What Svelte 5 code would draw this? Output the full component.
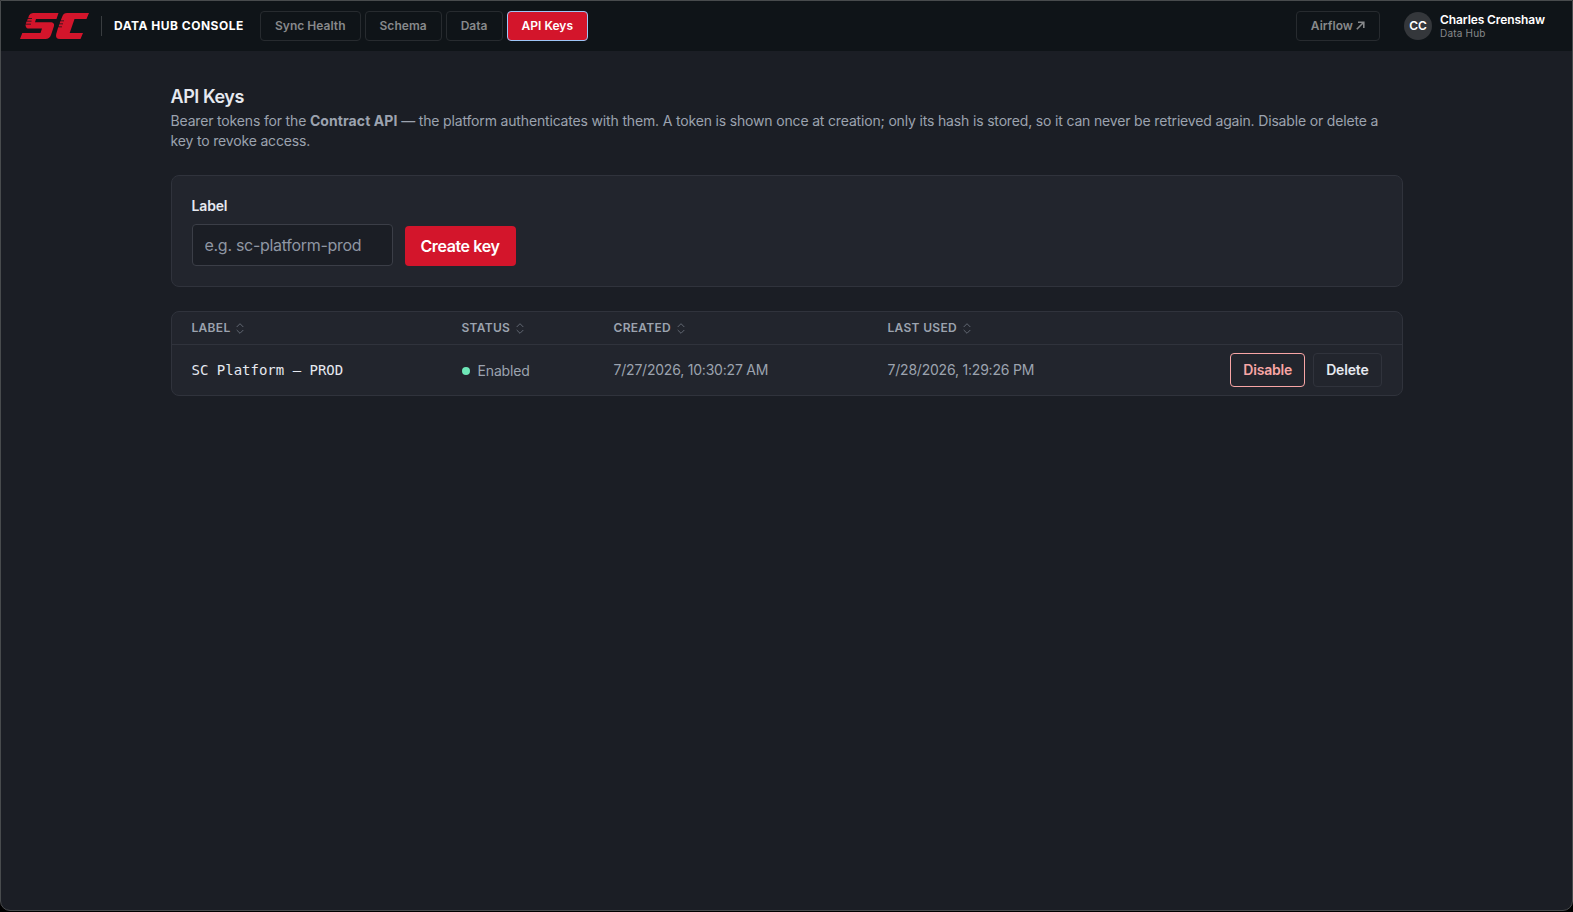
<script>
  const tabs = ['Sync Health', 'Schema', 'Data', 'API Keys'];
  const active = 'API Keys';
  const columns = ['Label', 'Status', 'Created', 'Last used'];
  const keys = [
    {
      label: 'SC Platform — PROD',
      status: 'Enabled',
      created: '7/27/2026, 10:30:27 AM',
      used: '7/28/2026, 1:29:26 PM'
    }
  ];
</script>

<div class="window">
  <header>
    <svg class="logo" width="70" height="27" viewBox="0 0 70 27" aria-label="SC">
      <g fill="#d3152b">
        <path d="M13 0H38.500L36.500 6H16L15 9.200H31.500Q34.500 9.700 34 13L31 22Q29.500 26 25.500 26H0L2.300 20H20.500L22 15.500H8Q5.500 15 5.500 11.400H11V10.700H5.800L6.500 8.500H11.500V7.800H7L7.800 5.700H12V5H8.200L9 2.500Q10 0 13 0Z" />
        <path d="M47 0H69L66.500 6H54.500L49.700 20H63L60.500 26H40Q35 26 36.200 21L38.200 14.300H42V13.600H38.600L39.300 11.300H43V10.600H39.600L40.300 8.300H44V7.600H40.700L42.500 3Q43.500 0 47 0Z" />
      </g>
    </svg>
    <span class="rule"></span>
    <strong class="product">DATA HUB CONSOLE</strong>
    <nav>
      {#each tabs as tab}
        <button class="tab" class:active={tab === active}>{tab}</button>
      {/each}
    </nav>
    <button class="tab airflow">Airflow
      <svg width="9" height="9" viewBox="0 0 9 9" fill="none" stroke="currentColor" stroke-width="1.6"><path d="M.8 8.200 7.700 1.300M2 1.200H7.800V7" /></svg>
    </button>
    <div class="avatar">CC</div>
    <div class="user">
      <span class="name">Charles Crenshaw</span>
      <span class="team">Data Hub</span>
    </div>
  </header>

  <main>
    <h1>API Keys</h1>
    <p class="intro">
      Bearer tokens for the <b>Contract API</b> — the platform authenticates with them. A token is
      shown once at creation; only its hash is stored, so it can never be retrieved again. Disable or
      delete a key to revoke access.
    </p>

    <section class="card form">
      <label>
        <span class="caption">Label</span>
        <input placeholder="e.g. sc-platform-prod" />
      </label>
      <button class="create">Create key</button>
    </section>

    <section class="card table">
      <div class="row head">
        {#each columns as column}
          <div class="th">
            <span>{column}</span>
            <svg width="8" height="11" viewBox="0 0 8 11" fill="none" stroke="currentColor" stroke-width="1"><path d="M.7 4 4 .7 7.300 4M.7 7 4 10.300 7.300 7" /></svg>
          </div>
        {/each}
        <div></div>
      </div>
      {#each keys as key}
        <div class="row body">
          <div class="mono">{key.label}</div>
          <div class="status"><i></i>{key.status}</div>
          <div class="date">{key.created}</div>
          <div class="date">{key.used}</div>
          <div class="actions">
            <button class="danger">Disable</button>
            <button>Delete</button>
          </div>
        </div>
      {/each}
    </section>
  </main>
</div>

<style>
  :global(body) {
    background: #000;
  }
  * {
    box-sizing: border-box;
  }
  .window {
    height: 911px;
    border: 1px solid #484b4d;
    border-radius: 0 0 10px 10px;
    overflow: hidden;
    background: #1b1e25;
    color: #e6e9f0;
    font-family: Inter, sans-serif;
    font-size: 14px;
  }
  button,
  input {
    font-family: inherit;
    margin: 0;
  }
  header {
    display: flex;
    align-items: center;
    height: 50px;
    padding: 0 27px 0 19px;
    background: #0f1418;
    color: #fff;
  }
  .logo {
    flex: none;
  }
  .rule {
    flex: none;
    width: 1px;
    height: 20px;
    margin: 0 12px 0 11px;
    background: #393d40;
  }
  .product {
    width: 130px;
    padding-bottom: 1px;
    font-size: 12px;
    font-weight: 700;
    letter-spacing: 0.5px;
    white-space: nowrap;
  }
  nav {
    display: flex;
    gap: 4px;
    margin-left: 16px;
  }
  .tab {
    height: 30px;
    padding: 0 14px 2px;
    border: 1px solid #272b2f;
    border-radius: 4px;
    background: transparent;
    color: #87898b;
    font-size: 12px;
    font-weight: 600;
    letter-spacing: 0.03px;
    white-space: nowrap;
  }
  .tab.active {
    border-color: #9dc5f6;
    background: #d3152b;
    color: #fff;
  }
  .airflow {
    margin-left: auto;
  }
  .avatar {
    width: 28px;
    height: 28px;
    margin: 0 8px 0 24px;
    border-radius: 50%;
    background: #34373b;
    font-size: 12px;
    font-weight: 600;
    line-height: 27px;
    text-align: center;
  }
  .user {
    display: flex;
    flex-direction: column;
    padding-bottom: 2px;
    white-space: nowrap;
  }
  .name {
    font-size: 12px;
    font-weight: 600;
    letter-spacing: -0.1px;
    line-height: 15px;
  }
  .team {
    color: #87898b;
    font-size: 10px;
    letter-spacing: 0.2px;
    line-height: 12px;
  }
  main {
    width: 1232px;
    margin: 0 auto;
    padding-top: 32px;
  }
  h1 {
    margin: 0;
    font-size: 18px;
    font-weight: 600;
    letter-spacing: -0.45px;
    line-height: 28px;
  }
  .intro {
    margin: 0 0 24px;
    padding-right: 8px;
    color: #9ca3af;
    letter-spacing: -0.165px;
    line-height: 20px;
  }
  .intro b {
    font-weight: 700;
    letter-spacing: 0.08px;
  }
  .card {
    border: 1px solid #30333c;
    border-radius: 8px;
    background: #22252d;
  }
  .form {
    display: flex;
    align-items: flex-end;
    gap: 12px;
    height: 112px;
    padding: 20px;
  }
  label {
    display: flex;
    flex-direction: column;
    gap: 8px;
  }
  .caption {
    font-weight: 600;
    letter-spacing: -0.15px;
    line-height: 20px;
  }
  input {
    width: 201px;
    height: 42px;
    padding: 0 12px;
    border: 1px solid #3b3e47;
    border-radius: 4px;
    background: #1b1e25;
    font-size: 16px;
    letter-spacing: -0.29px;
  }
  input::placeholder {
    color: #8f96a3;
  }
  .create {
    width: 111px;
    height: 40px;
    padding: 0;
    border: 0;
    border-radius: 4px;
    background: #d3152b;
    color: #fff;
    font-size: 16px;
    font-weight: 600;
    letter-spacing: -0.38px;
  }
  .table {
    margin-top: 24px;
  }
  .row {
    display: grid;
    grid-template-columns: 270px 152px 274px 1fr 154px;
    align-items: center;
    padding: 0 20px;
  }
  .head {
    height: 33px;
    border-bottom: 1px solid #30333c;
  }
  .th {
    display: flex;
    align-items: center;
    gap: 6px;
    color: #9ca3af;
    font-size: 12px;
    font-weight: 600;
    letter-spacing: 0.3px;
    text-transform: uppercase;
  }
  .th span {
    padding-bottom: 1px;
  }
  .th svg {
    color: #626772;
    margin-top: 1px;
  }
  .body {
    height: 50px;
    color: #9ca3af;
  }
  .mono {
    color: #e6e9f0;
    font-family: 'DejaVu Sans Mono', monospace;
  }
  .date {
    padding-bottom: 1px;
    letter-spacing: -0.21px;
  }
  .status {
    display: flex;
    align-items: center;
    gap: 8px;
    padding-top: 1px;
    letter-spacing: -0.15px;
  }
  .status i {
    width: 8px;
    height: 8px;
    margin-top: 1px;
    border-radius: 50%;
    background: #6ee7b7;
  }
  .actions {
    display: flex;
    justify-content: flex-end;
    gap: 8px;
  }
  .actions button {
    height: 34px;
    padding: 0 12px 1px;
    border: 1px solid #30333c;
    border-radius: 4px;
    background: transparent;
    color: #e6e9f0;
    font-size: 14px;
    font-weight: 600;
    letter-spacing: -0.18px;
  }
  .actions .danger {
    border-color: #f8a5a5;
    color: #f8a5a5;
  }
</style>
